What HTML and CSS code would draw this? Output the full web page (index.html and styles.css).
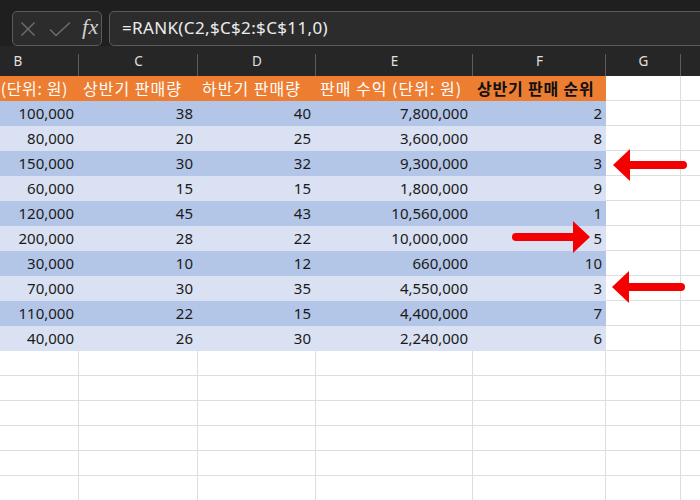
FILE: index.html
```html
<!DOCTYPE html>
<html>
<head>
<meta charset="utf-8">
<link rel="stylesheet" href="styles.css">
</head>
<body>
<div class="app">
  <div class="fbar">
    <div class="btnbox">
      <svg class="ico" width="16" height="16" viewBox="0 0 16 16"><path d="M1.5 1.5 L14.5 14.5 M14.5 1.5 L1.5 14.5" stroke="#6e6e6e" stroke-width="1.4" fill="none"/></svg>
      <svg class="ico chk" width="22" height="16" viewBox="0 0 22 16"><path d="M1 8.5 L7 14.5 L21 1.5" stroke="#6e6e6e" stroke-width="1.4" fill="none"/></svg>
      <span class="fx">fx</span>
    </div>
    <div class="formula">=RANK(C2,$C$2:$C$11,0)</div>
  </div>

  <div class="sheet">
    <div class="row colhead">
      <div class="ch">B</div><div class="ch">C</div><div class="ch">D</div><div class="ch">E</div><div class="ch">F</div><div class="ch">G</div><div class="ch last"></div>
    </div>
    <div class="row hdr">
      <div class="h hb">(단위: 원)</div>
      <div class="h">상반기 판매량</div>
      <div class="h">하반기 판매량</div>
      <div class="h">판매 수익 (단위: 원)</div>
      <div class="h hf">상반기 판매 순위</div>
      <div class="w g"></div><div class="w"></div>
    </div>
    <div class="row dark"><div class="n">100,000</div><div class="n">38</div><div class="n">40</div><div class="n">7,800,000</div><div class="n f">2</div><div class="w g"></div><div class="w"></div></div>
    <div class="row light"><div class="n">80,000</div><div class="n">20</div><div class="n">25</div><div class="n">3,600,000</div><div class="n f">8</div><div class="w g"></div><div class="w"></div></div>
    <div class="row dark"><div class="n">150,000</div><div class="n">30</div><div class="n">32</div><div class="n">9,300,000</div><div class="n f">3</div><div class="w g"></div><div class="w"></div></div>
    <div class="row light"><div class="n">60,000</div><div class="n">15</div><div class="n">15</div><div class="n">1,800,000</div><div class="n f">9</div><div class="w g"></div><div class="w"></div></div>
    <div class="row dark"><div class="n">120,000</div><div class="n">45</div><div class="n">43</div><div class="n">10,560,000</div><div class="n f">1</div><div class="w g"></div><div class="w"></div></div>
    <div class="row light"><div class="n">200,000</div><div class="n">28</div><div class="n">22</div><div class="n">10,000,000</div><div class="n f">5</div><div class="w g"></div><div class="w"></div></div>
    <div class="row dark"><div class="n">30,000</div><div class="n">10</div><div class="n">12</div><div class="n">660,000</div><div class="n f">10</div><div class="w g"></div><div class="w"></div></div>
    <div class="row light"><div class="n">70,000</div><div class="n">30</div><div class="n">35</div><div class="n">4,550,000</div><div class="n f">3</div><div class="w g"></div><div class="w"></div></div>
    <div class="row dark"><div class="n">110,000</div><div class="n">22</div><div class="n">15</div><div class="n">4,400,000</div><div class="n f">7</div><div class="w g"></div><div class="w"></div></div>
    <div class="row light"><div class="n">40,000</div><div class="n">26</div><div class="n">30</div><div class="n">2,240,000</div><div class="n f">6</div><div class="w g"></div><div class="w"></div></div>
    <div class="row empty"><div class="w"></div><div class="w"></div><div class="w"></div><div class="w"></div><div class="w"></div><div class="w"></div><div class="w"></div></div>
    <div class="row empty"><div class="w"></div><div class="w"></div><div class="w"></div><div class="w"></div><div class="w"></div><div class="w"></div><div class="w"></div></div>
    <div class="row empty"><div class="w"></div><div class="w"></div><div class="w"></div><div class="w"></div><div class="w"></div><div class="w"></div><div class="w"></div></div>
    <div class="row empty"><div class="w"></div><div class="w"></div><div class="w"></div><div class="w"></div><div class="w"></div><div class="w"></div><div class="w"></div></div>
    <div class="row empty"><div class="w"></div><div class="w"></div><div class="w"></div><div class="w"></div><div class="w"></div><div class="w"></div><div class="w"></div></div>
    <div class="row empty"><div class="w"></div><div class="w"></div><div class="w"></div><div class="w"></div><div class="w"></div><div class="w"></div><div class="w"></div></div>
  </div>

  <svg class="arrows" width="700" height="500" viewBox="0 0 700 500">
    <g fill="#f50000" stroke="#f50000">
      <line x1="628" y1="165" x2="683" y2="165" stroke-width="8" stroke-linecap="round"/>
      <polygon points="613,165 630,149 630,181" stroke="none"/>
      <line x1="516" y1="237" x2="575" y2="237" stroke-width="8" stroke-linecap="round"/>
      <polygon points="590,237 573,221 573,253" stroke="none"/>
      <line x1="627" y1="287" x2="681" y2="287" stroke-width="8" stroke-linecap="round"/>
      <polygon points="612,287 629,271 629,303" stroke="none"/>
    </g>
  </svg>
</div>
</body>
</html>
```

FILE: styles.css
```css
html, body {
  margin: 0;
  padding: 0;
  background: #ffffff;
}
.app {
  position: relative;
  width: 700px;
  height: 500px;
  overflow: hidden;
  background: #ffffff;
}
.fbar {
  height: 46px;
  background: #1f1f1f;
  display: flex;
  align-items: flex-start;
  padding-top: 11px;
  padding-left: 12px;
  box-sizing: border-box;
  gap: 7px;
}
.btnbox {
  width: 90px;
  height: 35px;
  box-sizing: border-box;
  border: 1px solid #5b5b5b;
  border-radius: 5px;
  background: #2c2c2c;
  display: flex;
  align-items: center;
  padding-left: 7px;
}
.ico { display: block; }
.chk { margin-left: 13px; }
.fx {
  margin-left: 11px;
  font-family: "Liberation Serif", serif;
  font-style: italic;
  font-size: 22px;
  color: #d2d2d2;
  line-height: 1;
  margin-top: -3px;
  letter-spacing: 0.5px;
}
.formula {
  flex: 1;
  height: 35px;
  box-sizing: border-box;
  border: 1px solid #5b5b5b;
  border-radius: 5px;
  background: #2c2c2c;
  margin-right: -20px;
  font-family: "Noto Sans", sans-serif;
  font-size: 17px;
  letter-spacing: 0.35px;
  color: #ececec;
  line-height: 32px;
  padding-left: 12px;
}
.sheet {
  margin-left: -43px;
  width: 770px;
}
.row {
  display: grid;
  grid-template-columns: 122px 119px 118px 157px 133px 75px 1fr;
  height: 25px;
}
.row > div {
  box-sizing: border-box;
  height: 25px;
}
.colhead {
  height: 30px;
  background: #262626;
}
.colhead .ch {
  height: 30px;
  display: flex;
  align-items: center;
  justify-content: center;
  font-family: "Noto Sans", sans-serif;
  font-size: 13.5px;
  color: #e0e0e0;
  position: relative;
}
.colhead .ch::after {
  content: "";
  position: absolute;
  right: 0;
  top: 8px;
  bottom: 0;
  width: 1px;
  background: #5c5c5c;
}
.colhead .ch.last::after { display: none; }
.hdr .h {
  background: #ed7d31;
  color: #ffffff;
  font-family: "Noto Sans CJK KR", sans-serif;
  font-size: 16px;
  letter-spacing: 1px;
  line-height: 24px;
  padding-left: 4px;
  white-space: nowrap;
  overflow: hidden;
}
.hdr .hb {
  text-align: right;
  padding-right: 11px;
  padding-left: 0;
  letter-spacing: 0.6px;
}
.hdr .hf {
  color: #111111;
  font-weight: bold;
  letter-spacing: 0.8px;
}
.n {
  font-family: "Noto Sans", sans-serif;
  font-size: 15px;
  color: #1a1a1a;
  text-align: right;
  padding-right: 5px;
  line-height: 25px;
}
.n.f { padding-right: 4px; background: #b4c6e7; }
.dark .n { background: #b4c6e7; }
.light .n { background: #d9e1f2; }
.w {
  background: #ffffff;
  border-bottom: 1px solid #dedede;
}
.w.g { border-right: 1px solid #dedede; }
.empty .w { border-right: 1px solid #dedede; }
.arrows {
  position: absolute;
  left: 0;
  top: 0;
  pointer-events: none;
}
```
